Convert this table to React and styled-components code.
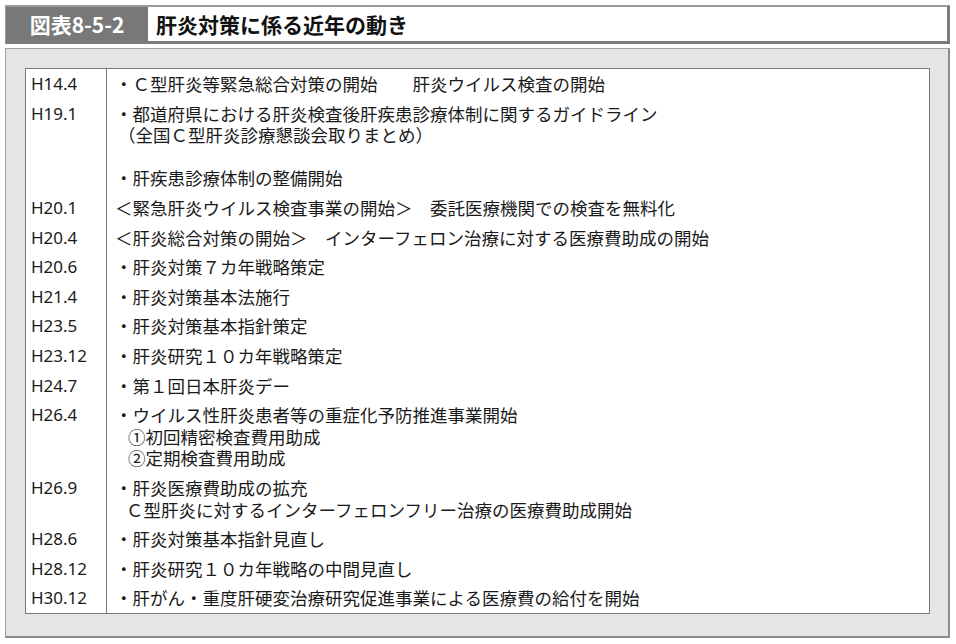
import styled, { createGlobalStyle } from "styled-components";

let GlobalStyle = createGlobalStyle`
  body {
    margin: 0;
    background: #ffffff;
    font-family: "Noto Sans CJK JP", "Noto Sans", sans-serif;
    color: #1a1a1a;
  }
`;

let Page = styled.div`
  width: 956px;
  height: 644px;
  padding: 5px 6px 0 5px;
  box-sizing: border-box;
  display: flex;
  flex-direction: column;
  gap: 4px;
`;

let Header = styled.div`
  display: flex;
  height: 39px;
  box-sizing: border-box;
  border-top: 2px solid #9a9a9a;
  border-left: 1px solid #9a9a9a;
  border-right: 3px solid #7c7c7c;
  border-bottom: 3px solid #7c7c7c;
  background: #ffffff;
`;

let Label = styled.div`
  width: 142px;
  background: #787878;
  color: #ffffff;
  font-size: 21px;
  font-weight: 700;
  display: flex;
  align-items: center;
  justify-content: center;
`;

let Title = styled.h1`
  margin: 0;
  padding-left: 8px;
  font-size: 21px;
  font-weight: 700;
  display: flex;
  align-items: center;
  color: #111111;
`;

let Panel = styled.div`
  flex: 1;
  margin-bottom: 6px;
  background: #e5e5e5;
  border: 1px solid #a0a0a0;
  border-right: 2px solid #8c8c8c;
  border-bottom: 2px solid #8c8c8c;
  padding: 19px 18px 0 19px;
`;

let Table = styled.table`
  width: 100%;
  border-collapse: collapse;
  background: #ffffff;
  border: 1px solid #7a7a7a;
  font-size: 17.5px;
  line-height: 21.6px;
`;

let DateCell = styled.td`
  width: 75px;
  padding: 4px 0 4px 5px;
  vertical-align: top;
  border-right: 1px solid #7a7a7a;
  white-space: nowrap;
  font-family: "Noto Sans", "Noto Sans CJK JP", sans-serif;
  font-size: 17px;
`;

let TextCell = styled.td`
  padding: 4px 8px 4px 8px;
  vertical-align: top;
  white-space: nowrap;
`;

let Line = styled.div`
  min-height: 21.6px;
  padding-left: ${(props) => props.indent || 0}px;
`;

let rows = [
  { date: "H14.4", lines: [["・Ｃ型肝炎等緊急総合対策の開始　　肝炎ウイルス検査の開始"]] },
  {
    date: "H19.1",
    lines: [
      ["・都道府県における肝炎検査後肝疾患診療体制に関するガイドライン"],
      ["（全国Ｃ型肝炎診療懇談会取りまとめ）", 3],
      [""],
      ["・肝疾患診療体制の整備開始"],
    ],
  },
  { date: "H20.1", lines: [["＜緊急肝炎ウイルス検査事業の開始＞　委託医療機関での検査を無料化"]] },
  { date: "H20.4", lines: [["＜肝炎総合対策の開始＞　インターフェロン治療に対する医療費助成の開始"]] },
  { date: "H20.6", lines: [["・肝炎対策７カ年戦略策定"]] },
  { date: "H21.4", lines: [["・肝炎対策基本法施行"]] },
  { date: "H23.5", lines: [["・肝炎対策基本指針策定"]] },
  { date: "H23.12", lines: [["・肝炎研究１０カ年戦略策定"]] },
  { date: "H24.7", lines: [["・第１回日本肝炎デー"]] },
  {
    date: "H26.4",
    lines: [
      ["・ウイルス性肝炎患者等の重症化予防推進事業開始"],
      ["①初回精密検査費用助成", 13],
      ["②定期検査費用助成", 13],
    ],
  },
  {
    date: "H26.9",
    lines: [
      ["・肝炎医療費助成の拡充"],
      ["Ｃ型肝炎に対するインターフェロンフリー治療の医療費助成開始", 11],
    ],
  },
  { date: "H28.6", lines: [["・肝炎対策基本指針見直し"]] },
  { date: "H28.12", lines: [["・肝炎研究１０カ年戦略の中間見直し"]] },
  { date: "H30.12", lines: [["・肝がん・重度肝硬変治療研究促進事業による医療費の給付を開始"]] },
];

export default function App() {
  return (
    <>
      <GlobalStyle />
      <Page>
        <Header>
          <Label>図表8-5-2</Label>
          <Title>肝炎対策に係る近年の動き</Title>
        </Header>
        <Panel>
          <Table>
            <tbody>
              {rows.map((row) => (
                <tr key={row.date}>
                  <DateCell>{row.date}</DateCell>
                  <TextCell>
                    {row.lines.map(([text, indent], i) => (
                      <Line key={i} indent={indent}>
                        {text}
                      </Line>
                    ))}
                  </TextCell>
                </tr>
              ))}
            </tbody>
          </Table>
        </Panel>
      </Page>
    </>
  );
}
